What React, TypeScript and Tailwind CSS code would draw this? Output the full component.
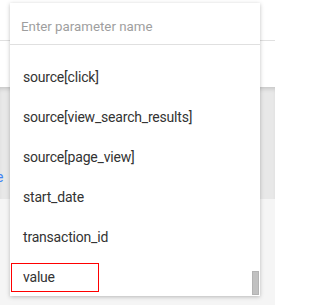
const items = [
  'source[click]',
  'source[view_search_results]',
  'source[page_view]',
  'start_date',
  'transaction_id',
  'value',
];

export default function App() {
  return (
    <div className="relative w-[275px] h-[305px] overflow-hidden bg-[#f5f5f5] font-['Roboto',sans-serif]">
      <div className="h-[41px] bg-white border-b border-[#e0e0e0]" />
      <div className="h-[46px] bg-white" />
      <div className="h-[112px] bg-[#e8e8e8] shadow-[inset_0_4px_4px_-2px_rgba(0,0,0,0.15)] flex items-start pt-[83px]">
        <span className="ml-[-4px] text-[14px] leading-none text-[#4285f4]">e</span>
      </div>

      <div className="absolute left-[10px] top-[3px] w-[250px] h-[293px] bg-white shadow-[0_1px_4px_rgba(0,0,0,0.25)] flex flex-col">
        <div className="h-[42px] shrink-0 border-b border-[#e0e0e0] flex items-center px-[11px] pt-[6px]">
          <input
            className="w-full outline-none text-[13.3px] text-[#333] placeholder:text-[#9e9e9e] bg-transparent"
            placeholder="Enter parameter name"
          />
        </div>
        <div className="relative flex-1 overflow-hidden pt-[12px]">
          {items.map((item) => (
            <div
              key={item}
              className="relative h-[40px] flex items-center px-[13px] text-[14px] tracking-[-0.2px] text-[#333]"
            >
              {item}
              {item === 'value' && (
                <div className="absolute left-[1px] top-[6px] w-[88px] h-[29px] border border-[#ff0000]" />
              )}
            </div>
          ))}
          <div className="absolute right-[1px] bottom-[1px] w-[7px] h-[24px] bg-[#c1c1c1] border border-[#b3b3b3]" />
        </div>
      </div>
    </div>
  );
}
